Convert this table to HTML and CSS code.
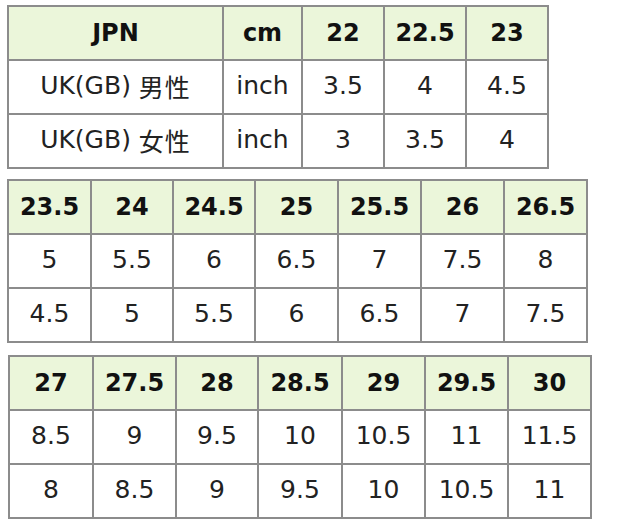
FILE: index.html
```html
<!DOCTYPE html>
<html lang="ja">
<head>
<meta charset="utf-8">
<title>Size chart</title>
<link rel="stylesheet" href="styles.css">
</head>
<body>
<div class="page">
  <div class="chart chart-1">
    <div class="cell head">JPN</div><div class="cell head">cm</div><div class="cell head">22</div><div class="cell head">22.5</div><div class="cell head">23</div>
    <div class="cell">UK(GB) <span class="jp">男性</span></div><div class="cell">inch</div><div class="cell">3.5</div><div class="cell">4</div><div class="cell">4.5</div>
    <div class="cell">UK(GB) <span class="jp">女性</span></div><div class="cell">inch</div><div class="cell">3</div><div class="cell">3.5</div><div class="cell">4</div>
  </div>
  <div class="chart chart-2">
    <div class="cell head">23.5</div><div class="cell head">24</div><div class="cell head">24.5</div><div class="cell head">25</div><div class="cell head">25.5</div><div class="cell head">26</div><div class="cell head">26.5</div>
    <div class="cell">5</div><div class="cell">5.5</div><div class="cell">6</div><div class="cell">6.5</div><div class="cell">7</div><div class="cell">7.5</div><div class="cell">8</div>
    <div class="cell">4.5</div><div class="cell">5</div><div class="cell">5.5</div><div class="cell">6</div><div class="cell">6.5</div><div class="cell">7</div><div class="cell">7.5</div>
  </div>
  <div class="chart chart-3">
    <div class="cell head">27</div><div class="cell head">27.5</div><div class="cell head">28</div><div class="cell head">28.5</div><div class="cell head">29</div><div class="cell head">29.5</div><div class="cell head">30</div>
    <div class="cell">8.5</div><div class="cell">9</div><div class="cell">9.5</div><div class="cell">10</div><div class="cell">10.5</div><div class="cell">11</div><div class="cell">11.5</div>
    <div class="cell">8</div><div class="cell">8.5</div><div class="cell">9</div><div class="cell">9.5</div><div class="cell">10</div><div class="cell">10.5</div><div class="cell">11</div>
  </div>
</div>
</body>
</html>
```
FILE: styles.css
```css
html, body {
  margin: 0;
  padding: 0;
  background: #ffffff;
}
.page {
  display: flex;
  flex-direction: column;
  align-items: flex-start;
  gap: 10px;
  padding: 5px 0 0 7px;
  font-family: "DejaVu Sans", Verdana, "Noto Sans CJK JP", sans-serif;
  color: #222222;
}
.chart {
  display: grid;
  grid-auto-rows: 52px;
  gap: 2px;
  padding: 2px;
  background: #8c8c8c;
}
.chart-1 {
  grid-template-columns: 213px 77px 80px 80px 80px;
}
.chart-2 {
  grid-template-columns: 81px 80px 80px 81px 81px 81px 81px;
}
.chart-3 {
  margin-top: 2px;
  margin-left: 1px;
  grid-template-columns: 82px 81px 80px 82px 81px 81px 81px;
}
.cell {
  display: flex;
  align-items: center;
  justify-content: center;
  background: #ffffff;
  font-size: 25px;
  white-space: pre;
  padding-bottom: 3px;
}
.jp {
  letter-spacing: 1px;
}
.head {
  background: #ebf6da;
  font-weight: bold;
  font-size: 24px;
  color: #111111;
  padding-bottom: 1px;
}
```
